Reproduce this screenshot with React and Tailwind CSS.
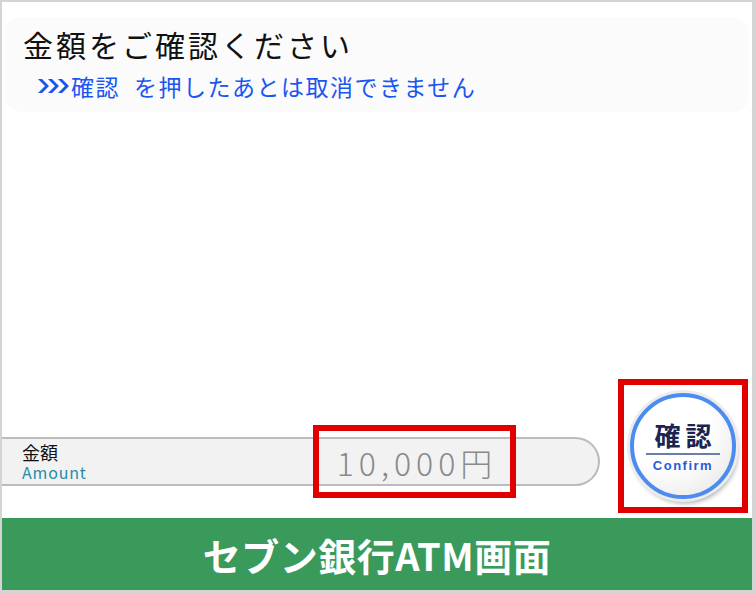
import React from 'react'

const jp = { fontFamily: '"Noto Sans CJK JP", "Noto Sans", sans-serif' }

const Chevrons = () => (
  <svg width="31" height="14" viewBox="0 0 31 14" className="mr-[2px]">
    {[0, 10, 20].map((x) => (
      <path key={x} d={`M${x} 0 L${x + 7} 7 L${x} 14 L${x + 4} 14 L${x + 11} 7 L${x + 4} 0 Z`} fill="#1a55f2" />
    ))}
  </svg>
)

const ConfirmButton = () => (
  <div className="w-[106px] h-[106px] rounded-full border-4 border-[#4a8cf0] bg-[radial-gradient(circle_at_35%_30%,#ffffff_45%,#e2e2e2_100%)] shadow-[0_0_0_3px_#ececec,2px_4px_5px_rgba(0,0,0,0.35)] flex flex-col items-center justify-center">
    <span className="text-[26px] leading-none font-bold tracking-[5px] pl-[5px] text-[#1b2650] mt-[2px]">確認</span>
    <span className="w-[74px] h-[2px] bg-[#6a7fa8] mt-[5px]" />
    <span className="text-[13px] leading-none font-bold tracking-[1.5px] text-[#2a5ad8] mt-[4px]" style={{ fontFamily: '"Liberation Sans", sans-serif' }}>Confirm</span>
  </div>
)

export default function App() {
  return (
    <div className="w-[756px] h-[593px] bg-white border-t-2 border-l-2 border-r-4 border-b-[3px] border-[#d4d4d4] flex flex-col" style={jp}>
      <div className="mt-[15px] mx-[3px] h-[95px] rounded-2xl bg-[#fbfbfb] pl-[18px] pt-[10px]">
        <h1 className="text-[30px] leading-[34px] tracking-[3px] text-[#111]">金額をご確認ください</h1>
        <p className="flex items-center mt-[12px] ml-[15px] text-[23px] leading-[26px] tracking-[1.5px] text-[#1a55f2]">
          <Chevrons />
          <span>確認</span>
          <span className="ml-[14px]">を押したあとは取消できません</span>
        </p>
      </div>

      <div className="flex-1" />

      <div className="relative flex items-start h-[134px]">
        <div className="mt-[58px] w-[598px] h-[49px] bg-[#f2f2f2] border-y-2 border-r-2 border-[#bcbcbc] rounded-r-full flex flex-col justify-center pl-[20px]">
          <span className="text-[18px] leading-[22px] text-[#111]">金額</span>
          <span className="text-[16px] leading-[19px] tracking-[0.8px] text-[#2a8aaa]">Amount</span>
        </div>
        <div className="absolute left-[311px] top-[46px] w-[203px] h-[73px] border-[6px] border-[#e00000] flex items-center justify-center">
          <span className="text-[32px] leading-none tracking-[5px] text-[#8a8a8a] font-light pl-[5px]">10,000円</span>
        </div>
        <div className="ml-[18px] w-[130px] h-[134px] border-[6px] border-[#e00000] flex items-center justify-center">
          <ConfirmButton />
        </div>
      </div>

      <div className="mt-[5px] h-[72px] bg-[#3a9a5c] flex items-center justify-center">
        <span className="text-[38px] font-bold text-white tracking-[0.5px]">セブン銀行ATM画面</span>
      </div>
    </div>
  )
}
